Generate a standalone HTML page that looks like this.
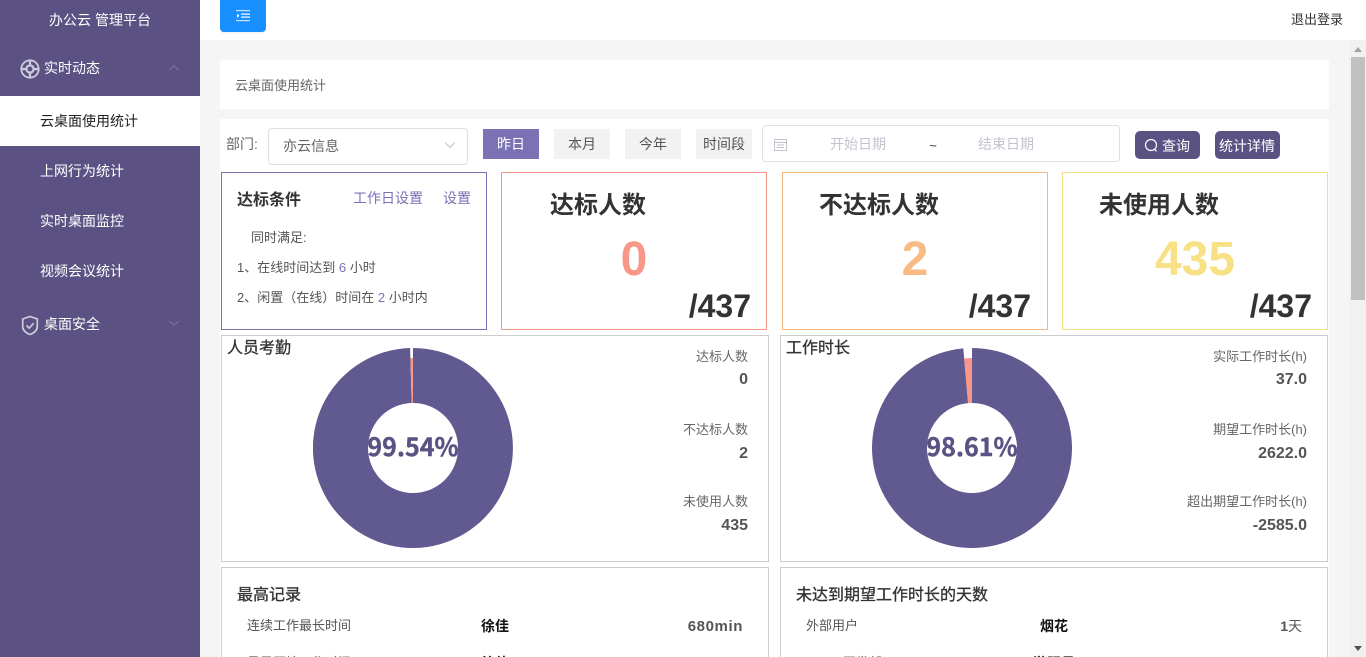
<!DOCTYPE html>
<html lang="zh-CN"><head><meta charset="utf-8"><title>办公云 管理平台</title>
<style>
*{box-sizing:border-box;margin:0;padding:0}
html,body{width:1366px;height:657px;overflow:hidden;background:#f5f5f5}
body{position:relative;font-family:"Liberation Sans","Noto Sans CJK SC",sans-serif;color:#333}
.a{position:absolute}
.t{position:absolute;white-space:nowrap;line-height:20px;font-size:13px}
.c{transform:translateX(-50%)}
.r{text-align:right}
.n{font-weight:400;font-size:14px;color:#fff}
.box{position:absolute;background:#fff;border:1px solid #ccc}
.btn{position:absolute;top:129px;width:56px;height:30px;background:#f2f2f2;font-size:14px;line-height:30px;text-align:center;color:#555}
.h{font-size:24px;font-weight:700;color:#333;line-height:34px}
.big{font-size:48px;font-weight:700;line-height:56px}
.tot{font-size:32px;font-weight:700;line-height:38px;color:#333}
.lb{font-size:13px;color:#666}
.v{font-size:16px;font-weight:700;color:#555}
</style></head><body>
<div class="a" style="left:0;top:0;width:200px;height:657px;background:#5b5283"></div>
<div class="a" style="left:200px;top:0;width:1166px;height:40px;background:#fff"></div>
<div class="t n c" style="left:100px;top:10px;font-size:14px">办公云 管理平台</div>
<svg class="a" style="left:20px;top:59px" width="20" height="20" viewBox="0 0 20 20" fill="none" stroke="#cfcbdc"><circle cx="10" cy="10" r="8.7" stroke-width="1.8"/><circle cx="10" cy="10" r="3.6" stroke-width="2.2"/><path d="M10 1.5V7M10 13v5.500M1.500 10H7M13 10h5.500" stroke-width="2.200"/></svg>
<div class="t n" style="left:44px;top:58px;font-size:14px">实时动态</div>
<svg class="a" style="left:168px;top:64px" width="12" height="8" fill="none" stroke="#7d75a0"><path d="M1 6l5-4 5 4"/></svg>
<div class="a" style="left:0;top:96px;width:200px;height:50px;background:#fff"></div>
<div class="t" style="left:40px;top:111px;font-size:14px;color:#222">云桌面使用统计</div>
<div class="t n" style="left:40px;top:161px">上网行为统计</div>
<div class="t n" style="left:40px;top:211px">实时桌面监控</div>
<div class="t n" style="left:40px;top:261px">视频会议统计</div>
<svg class="a" style="left:21px;top:315px" width="18" height="21" viewBox="0 0 18 21" fill="none" stroke="#cfcbdc" stroke-width="1.700"><path d="M9 1.500l7.300 2.500v7.500c0 4-3.500 6.500-7.300 8-3.800-1.500-7.300-4-7.300-8V4z"/><path d="M5.500 10.500l2.700 2.700 4.500-5"/></svg>
<div class="t n" style="left:44px;top:314px;font-size:14px">桌面安全</div>
<svg class="a" style="left:168px;top:319px" width="12" height="8" fill="none" stroke="#7d75a0"><path d="M1 2l5 4 5-4"/></svg>

<div class="a" style="left:220px;top:-4px;width:46px;height:36px;background:#1890ff;border-radius:4px;box-shadow:0 2px 0 rgba(0,0,0,.04)"></div>
<svg class="a" style="left:236px;top:10px" width="14" height="12" fill="#fff"><rect y="0" width="14" height="1.200" opacity=".75"/><rect x="5" y="3.500" width="9" height="1.200"/><rect x="5" y="6.500" width="9" height="1.200"/><rect y="10" width="14" height="1.200" opacity=".75"/><path d="M1 3.500l2.500 2.300L1 8z"/></svg>
<div class="t" style="left:1291px;top:10px;font-size:13px;color:#333">退出登录</div>

<div class="a" style="left:220px;top:60px;width:1109px;height:49px;background:#fff"></div>
<div class="t" style="left:235px;top:76px;font-size:13px;color:#666">云桌面使用统计</div>
<div class="a" style="left:220px;top:119px;width:1109px;height:538px;background:#fff"></div>

<div class="t" style="left:226px;top:134px;font-size:14px;color:#666">部门:</div>
<div class="a" style="left:268px;top:128px;width:200px;height:37px;border:1px solid #dcdfe6;border-radius:4px;background:#fff"></div>
<div class="t" style="left:283px;top:136px;font-size:14px;color:#666">亦云信息</div>
<svg class="a" style="left:444px;top:141px" width="12" height="8" fill="none" stroke="#c0c4cc"><path d="M1 1.500l5 5 5-5"/></svg>
<div class="btn" style="left:483px;background:#7a72b5;color:#fff">昨日</div>
<div class="btn" style="left:554px">本月</div>
<div class="btn" style="left:625px">今年</div>
<div class="btn" style="left:696px">时间段</div>
<div class="a" style="left:762px;top:125px;width:358px;height:37px;border:1px solid #dcdfe6;border-radius:4px;background:#fff"></div>
<svg class="a" style="left:774px;top:138px" width="13" height="13" fill="none" stroke="#c0c4cc"><rect x=".5" y="1.500" width="12" height="11"/><path d="M.5 4.500h12M3 7h7M3 9.500h7"/></svg>
<div class="t c" style="left:858px;top:134px;font-size:14px;color:#c0c4cc">开始日期</div>
<div class="t c" style="left:933px;top:136px;font-size:13px;color:#333">~</div>
<div class="t c" style="left:1006px;top:134px;font-size:14px;color:#c0c4cc">结束日期</div>
<div class="a" style="left:1135px;top:131px;width:65px;height:28px;background:#5b5283;border-radius:5px"></div>
<svg class="a" style="left:1144px;top:138px" width="15" height="15" fill="none" stroke="#fff" stroke-width="1.200"><circle cx="7" cy="7" r="5.500"/><path d="M10.500 11l2 2.500"/></svg>
<div class="t" style="left:1162px;top:136px;font-size:14px;color:#fff">查询</div>
<div class="a" style="left:1215px;top:131px;width:65px;height:28px;background:#5b5283;border-radius:5px"></div>
<div class="t" style="left:1219px;top:136px;font-size:14px;color:#fff">统计详情</div>

<div class="box" style="left:221px;top:172px;width:266px;height:158px;border-color:#7a72b5"></div>
<div class="t" style="left:237px;top:189px;font-size:16px;font-weight:700;color:#333;top:191px">达标条件</div>
<div class="t" style="left:353px;top:188px;font-size:14px;color:#7a72b5">工作日设置</div>
<div class="t" style="left:443px;top:188px;font-size:14px;color:#7a72b5">设置</div>
<div class="t" style="left:251px;top:228px;color:#555">同时满足:</div>
<div class="t" style="left:237px;top:258px;color:#555">1、在线时间达到 <span style="color:#7a72b5">6</span> 小时</div>
<div class="t" style="left:237px;top:288px;color:#555">2、闲置（在线）时间在 <span style="color:#7a72b5">2</span> 小时内</div>

<div class="box" style="left:501px;top:172px;width:266px;height:158px;border-color:#f9968a"></div>
<div class="t h" style="left:550px;top:189px">达标人数</div>
<div class="t big c" style="left:634px;top:232px;color:#f9968a">0</div>
<div class="t tot" style="right:615px;top:287px">/437</div>

<div class="box" style="left:782px;top:172px;width:266px;height:158px;border-color:#f5b57f"></div>
<div class="t h" style="left:819px;top:189px">不达标人数</div>
<div class="t big c" style="left:915px;top:232px;color:#f7bb83">2</div>
<div class="t tot" style="right:335px;top:287px">/437</div>

<div class="box" style="left:1062px;top:172px;width:266px;height:158px;border-color:#f5dd85"></div>
<div class="t h" style="left:1099px;top:189px">未使用人数</div>
<div class="t big c" style="left:1195px;top:232px;color:#f8e085">435</div>
<div class="t tot" style="right:54px;top:287px">/437</div>

<div class="box" style="left:221px;top:335px;width:548px;height:227px"></div>
<div class="t" style="left:227px;top:339px;font-size:16px;color:#333;-webkit-text-stroke:.3px #333">人员考勤</div>
<svg class="a" style="left:313px;top:348px" width="200" height="200" viewBox="-100 -100 200 200">
<path d="M0 -100A100 100 0 1 1 -2.900 -99.960L-1.300 -44.980A45 45 0 1 0 0 -45Z" fill="#615a90"/>
<path d="M0 -90L-2.600 -89.960L-1.300 -44.980L0 -45Z" fill="#f9968a"/>
</svg>
<div class="t c" style="left:413px;top:429px;font-size:25px;font-weight:700;line-height:34px;color:#5b5283;-webkit-text-stroke:.4px #5b5283;font-family:'Noto Sans CJK SC',sans-serif">99.54%</div>
<div class="t lb" style="right:618px;top:347px">达标人数</div>
<div class="t v" style="right:618px;top:370px">0</div>
<div class="t lb" style="right:618px;top:420px">不达标人数</div>
<div class="t v" style="right:618px;top:444px">2</div>
<div class="t lb" style="right:618px;top:492px">未使用人数</div>
<div class="t v" style="right:618px;top:516px">435</div>

<div class="box" style="left:780px;top:335px;width:548px;height:227px"></div>
<div class="t" style="left:786px;top:339px;font-size:16px;color:#333;-webkit-text-stroke:.3px #333">工作时长</div>
<svg class="a" style="left:872px;top:348px" width="200" height="200" viewBox="-100 -100 200 200">
<path d="M0 -100A100 100 0 1 1 -8.700 -99.620L-3.920 -44.830A45 45 0 1 0 0 -45Z" fill="#615a90"/>
<path d="M0 -90L-7.830 -89.660L-3.920 -44.830L0 -45Z" fill="#f9968a"/>
</svg>
<div class="t c" style="left:972px;top:429px;font-size:25px;font-weight:700;line-height:34px;color:#5b5283;-webkit-text-stroke:.4px #5b5283;font-family:'Noto Sans CJK SC',sans-serif">98.61%</div>
<div class="t lb" style="right:59px;top:347px">实际工作时长(h)</div>
<div class="t v" style="right:59px;top:370px">37.0</div>
<div class="t lb" style="right:59px;top:420px">期望工作时长(h)</div>
<div class="t v" style="right:59px;top:444px">2622.0</div>
<div class="t lb" style="right:59px;top:492px">超出期望工作时长(h)</div>
<div class="t v" style="right:59px;top:516px">-2585.0</div>

<div class="box" style="left:221px;top:567px;width:548px;height:120px"></div>
<div class="t" style="left:237px;top:586px;font-size:16px;color:#333;-webkit-text-stroke:.3px #333">最高记录</div>
<div class="t" style="left:247px;top:616px;color:#555">连续工作最长时间</div>
<div class="t" style="left:481px;top:616px;font-size:14px;font-weight:700;color:#111">徐佳</div>
<div class="t" style="right:623px;top:617px;font-size:15px;font-weight:700;color:#555;letter-spacing:.6px">680min</div>
<div class="t" style="left:247px;top:653px;color:#555">最早开始工作时间</div>
<div class="t" style="left:481px;top:653px;font-size:14px;font-weight:700;color:#111">徐佳</div>

<div class="box" style="left:780px;top:567px;width:548px;height:120px"></div>
<div class="t" style="left:796px;top:586px;font-size:16px;color:#333;-webkit-text-stroke:.3px #333">未达到期望工作时长的天数</div>
<div class="t" style="left:806px;top:616px;color:#555">外部用户</div>
<div class="t" style="left:1040px;top:616px;font-size:14px;font-weight:700;color:#111">烟花</div>
<div class="t" style="right:64px;top:616px;font-size:14px;color:#555"><b>1</b>天</div>
<div class="t" style="left:806px;top:653px;color:#555">Saleh 开发部</div>
<div class="t" style="left:1033px;top:653px;font-size:14px;font-weight:700;color:#111">游阳月</div>
<div class="t" style="right:64px;top:653px;font-size:14px;color:#555"><b>1</b>天</div>

<div class="a" style="left:1349px;top:40px;width:17px;height:617px;background:#f1f1f1"></div>
<div class="a" style="left:1351px;top:57px;width:14px;height:243px;background:#c1c1c1"></div>
<svg class="a" style="left:1353px;top:47px" width="10" height="6" fill="#a3a3a3"><path d="M5 0l4 5H1z"/></svg>
<svg class="a" style="left:1353px;top:646px" width="10" height="6" fill="#505050"><path d="M1 0h8L5 5z"/></svg>
</body></html>
